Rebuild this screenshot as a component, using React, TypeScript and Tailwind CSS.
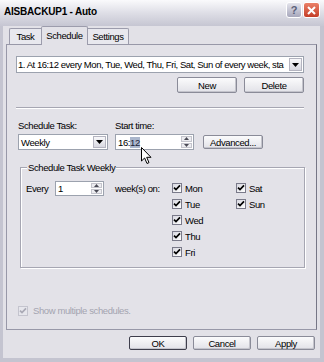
import React from 'react';

const panelBg = 'bg-[#e3e2e8]';

function Check({ disabled = false }: { disabled?: boolean }) {
  return (
    <span
      className={`w-[10px] h-[10px] shrink-0 border flex items-center justify-center ${
        disabled ? 'border-[#c4c4ce] bg-[#e6e6ec]' : 'border-[#7a7a8a] bg-gradient-to-br from-[#d8d8e0] to-[#ffffff]'
      }`}
    >
      <svg width="8" height="8" viewBox="0 0 8 8">
        <path d="M1 3.6 L3 5.6 L7 1.4" fill="none" stroke={disabled ? '#a9a9b5' : '#000'} strokeWidth="1.7" />
      </svg>
    </span>
  );
}

function Btn({ label, className = '', strong = false }: { label: string; className?: string; strong?: boolean }) {
  return (
    <div
      className={`flex items-center justify-center rounded-[2px] border bg-gradient-to-b from-[#fbfbfc] to-[#e2e2e8] shadow-[inset_-1px_-1px_0_#c4c4cc] ${
        strong ? 'border-[#3e3e4c]' : 'border-[#8a8b98]'
      } ${className}`}
    >
      {label}
    </div>
  );
}

function DropBtn() {
  return (
    <div className="w-[13px] self-stretch m-[1px] border border-[#b4b4c0] bg-gradient-to-b from-[#f8f8fa] to-[#d8d8e0] flex items-center justify-center">
      <svg width="7" height="4" viewBox="0 0 7 4">
        <path d="M0 0h7L3.5 4z" fill="#000" />
      </svg>
    </div>
  );
}

function Spin() {
  return (
    <div className="w-[11px] self-stretch flex flex-col m-[1px] gap-[1px]">
      <div className="flex-1 border border-[#c4c4cc] bg-[#ececf0] flex items-center justify-center">
        <svg width="5" height="3" viewBox="0 0 5 3">
          <path d="M2.5 0L5 3H0z" fill="#4a4a55" />
        </svg>
      </div>
      <div className="flex-1 border border-[#c4c4cc] bg-[#ececf0] flex items-center justify-center">
        <svg width="5" height="3" viewBox="0 0 5 3">
          <path d="M0 0h5L2.5 3z" fill="#4a4a55" />
        </svg>
      </div>
    </div>
  );
}

const days = ['Mon', 'Tue', 'Wed', 'Thu', 'Fri', 'Sat', 'Sun'];

export default function App() {
  return (
    <div className="relative w-[324px] h-[362px] overflow-hidden flex flex-col bg-[#c4c4d0] text-black font-['Liberation_Sans',Arial,sans-serif] text-[9.5px] tracking-[-0.4px] leading-[11px]">
      {/* title bar */}
      <div className="h-[26px] shrink-0 flex items-start pl-[4px] pr-[4px] bg-gradient-to-b from-[#fafafc] via-[#dedee6] to-[#c6c6d2]">
        <div className="mt-[6px] text-[10px] font-bold tracking-[-0.2px] leading-[12px]">AISBACKUP1 - Auto</div>
        <div className="ml-auto mt-[2px] flex gap-[1px]">
          <div className="w-[16px] h-[16px] rounded-[3px] border border-white bg-gradient-to-b from-[#e4e4ec] to-[#a8a8bc] flex items-center justify-center text-[11px] font-bold text-[#5a6078] tracking-normal">?</div>
          <div className="w-[17px] h-[16px] rounded-[3px] border border-white bg-gradient-to-b from-[#ea8068] to-[#c43c26] flex items-center justify-center">
            <svg width="9" height="9" viewBox="0 0 9 9">
              <path d="M1 1L8 8M8 1L1 8" stroke="#fff" strokeWidth="2" />
            </svg>
          </div>
        </div>
      </div>

      {/* body */}
      <div className="flex-1 ml-[3px] mr-[4px] mb-[4px] bg-[#e2e1e7] flex flex-col">
        {/* tabs */}
        <div className="h-[18px] shrink-0 flex items-end pl-[6px]">
          <div className="w-[32px] h-[16px] border-t border-l border-[#9c9cac] rounded-tl-[2px] bg-[#e8e8ee] flex items-center justify-center">Task</div>
          <div className={`relative z-10 -mb-px w-[47px] h-[19px] border-t border-l border-r border-[#9c9cac] rounded-t-[2px] ${panelBg} flex items-center justify-center pb-[2px]`}>
            Schedule
          </div>
          <div className="w-[41px] h-[16px] border-t border-r border-[#9c9cac] rounded-tr-[2px] bg-[#e8e8ee] flex items-center justify-center">Settings</div>
        </div>

        {/* panel */}
        <div className={`ml-[3px] w-[311px] h-[286px] shrink-0 border border-[#9898a8] border-r-[#767686] ${panelBg} flex flex-col`}>
          <div className="mt-[11px] ml-[9px] w-[288px] h-[17px] flex bg-white border border-[#9ca2ae]">
            <div className="flex-1 whitespace-nowrap pl-[1px] flex items-center tracking-[-0.45px]">
              1. At 16:12 every Mon, Tue, Wed, Thu, Fri, Sat, Sun of every week, sta
            </div>
            <DropBtn />
          </div>

          <div className="mt-[4px] pr-[12px] flex justify-end gap-[7px]">
            <Btn label="New" className="w-[60px] h-[16px]" />
            <Btn label="Delete" className="w-[60px] h-[16px]" />
          </div>

          <div className="mt-[14px] ml-[9px] mr-[12px] border-t border-b border-t-[#a6a6b2] border-b-white" />

          <div className="mt-[11px] ml-[11px] flex h-[11px]">
            <div className="w-[97px]">Schedule Task:</div>
            <div>Start time:</div>
          </div>

          <div className="mt-[3px] ml-[11px] flex h-[16px]">
            <div className="w-[90px] flex bg-white border border-[#9ca2ae]">
              <div className="flex-1 pl-[2px] flex items-center">Weekly</div>
              <DropBtn />
            </div>
            <div className="ml-[7px] w-[79px] flex bg-white border border-[#9ca2ae]">
              <div className="flex-1 pl-[2px] flex items-center">
                16:<span className="bg-[#aab6cc] text-[#1c2438]">12</span>
              </div>
              <Spin />
            </div>
            <Btn label="Advanced..." className="ml-[9px] w-[60px] h-[14px] self-center" />
          </div>

          {/* group box */}
          <div className="mt-[17px] ml-[13px] w-[285px] h-[101px] border border-[#a6a6b2] shadow-[inset_1px_1px_0_#ffffff,1px_1px_0_#ffffff] flex flex-col">
            <div className={`-mt-[6px] ml-[6px] w-fit px-[1px] ${panelBg}`}>Schedule Task Weekly</div>
            <div className="mt-[7px] ml-[5px] flex items-start">
              <div className="w-[29px] h-[16px] flex items-center">Every</div>
              <div className="mt-[1px] w-[49px] h-[15px] flex bg-white border border-[#9ca2ae]">
                <div className="flex-1 pl-[2px] flex items-center">1</div>
                <Spin />
              </div>
              <div className="ml-[11px] w-[57px] h-[16px] flex items-center">week(s) on:</div>
              <div className="grid grid-rows-5 grid-flow-col auto-cols-[64px]">
                {days.map((d) => (
                  <div key={d} className="h-[16px] flex items-center gap-[3px]">
                    <Check />
                    <span>{d}</span>
                  </div>
                ))}
              </div>
            </div>
          </div>

          <div className="mt-auto mb-[13px] ml-[11px] h-[11px] flex items-center gap-[5px] text-[#a4a4b0]">
            <Check disabled />
            <span>Show multiple schedules.</span>
          </div>
        </div>

        {/* dialog buttons */}
        <div className="mt-[6px] mr-[5px] flex justify-end gap-[6px]">
          <Btn label="OK" strong className="w-[58px] h-[14px]" />
          <Btn label="Cancel" className="w-[58px] h-[14px]" />
          <Btn label="Apply" className="w-[58px] h-[14px]" />
        </div>
      </div>

      {/* mouse pointer */}
      <svg className="absolute left-[141px] top-[147px]" width="11" height="18" viewBox="0 0 11 18">
        <path d="M0.5 0.5 L0.5 14 L3.6 11 L6 16.5 L8 15.6 L5.7 10.3 L10 10.3 Z" fill="#fff" stroke="#000" strokeWidth="1" strokeLinejoin="round" />
      </svg>
    </div>
  );
}
